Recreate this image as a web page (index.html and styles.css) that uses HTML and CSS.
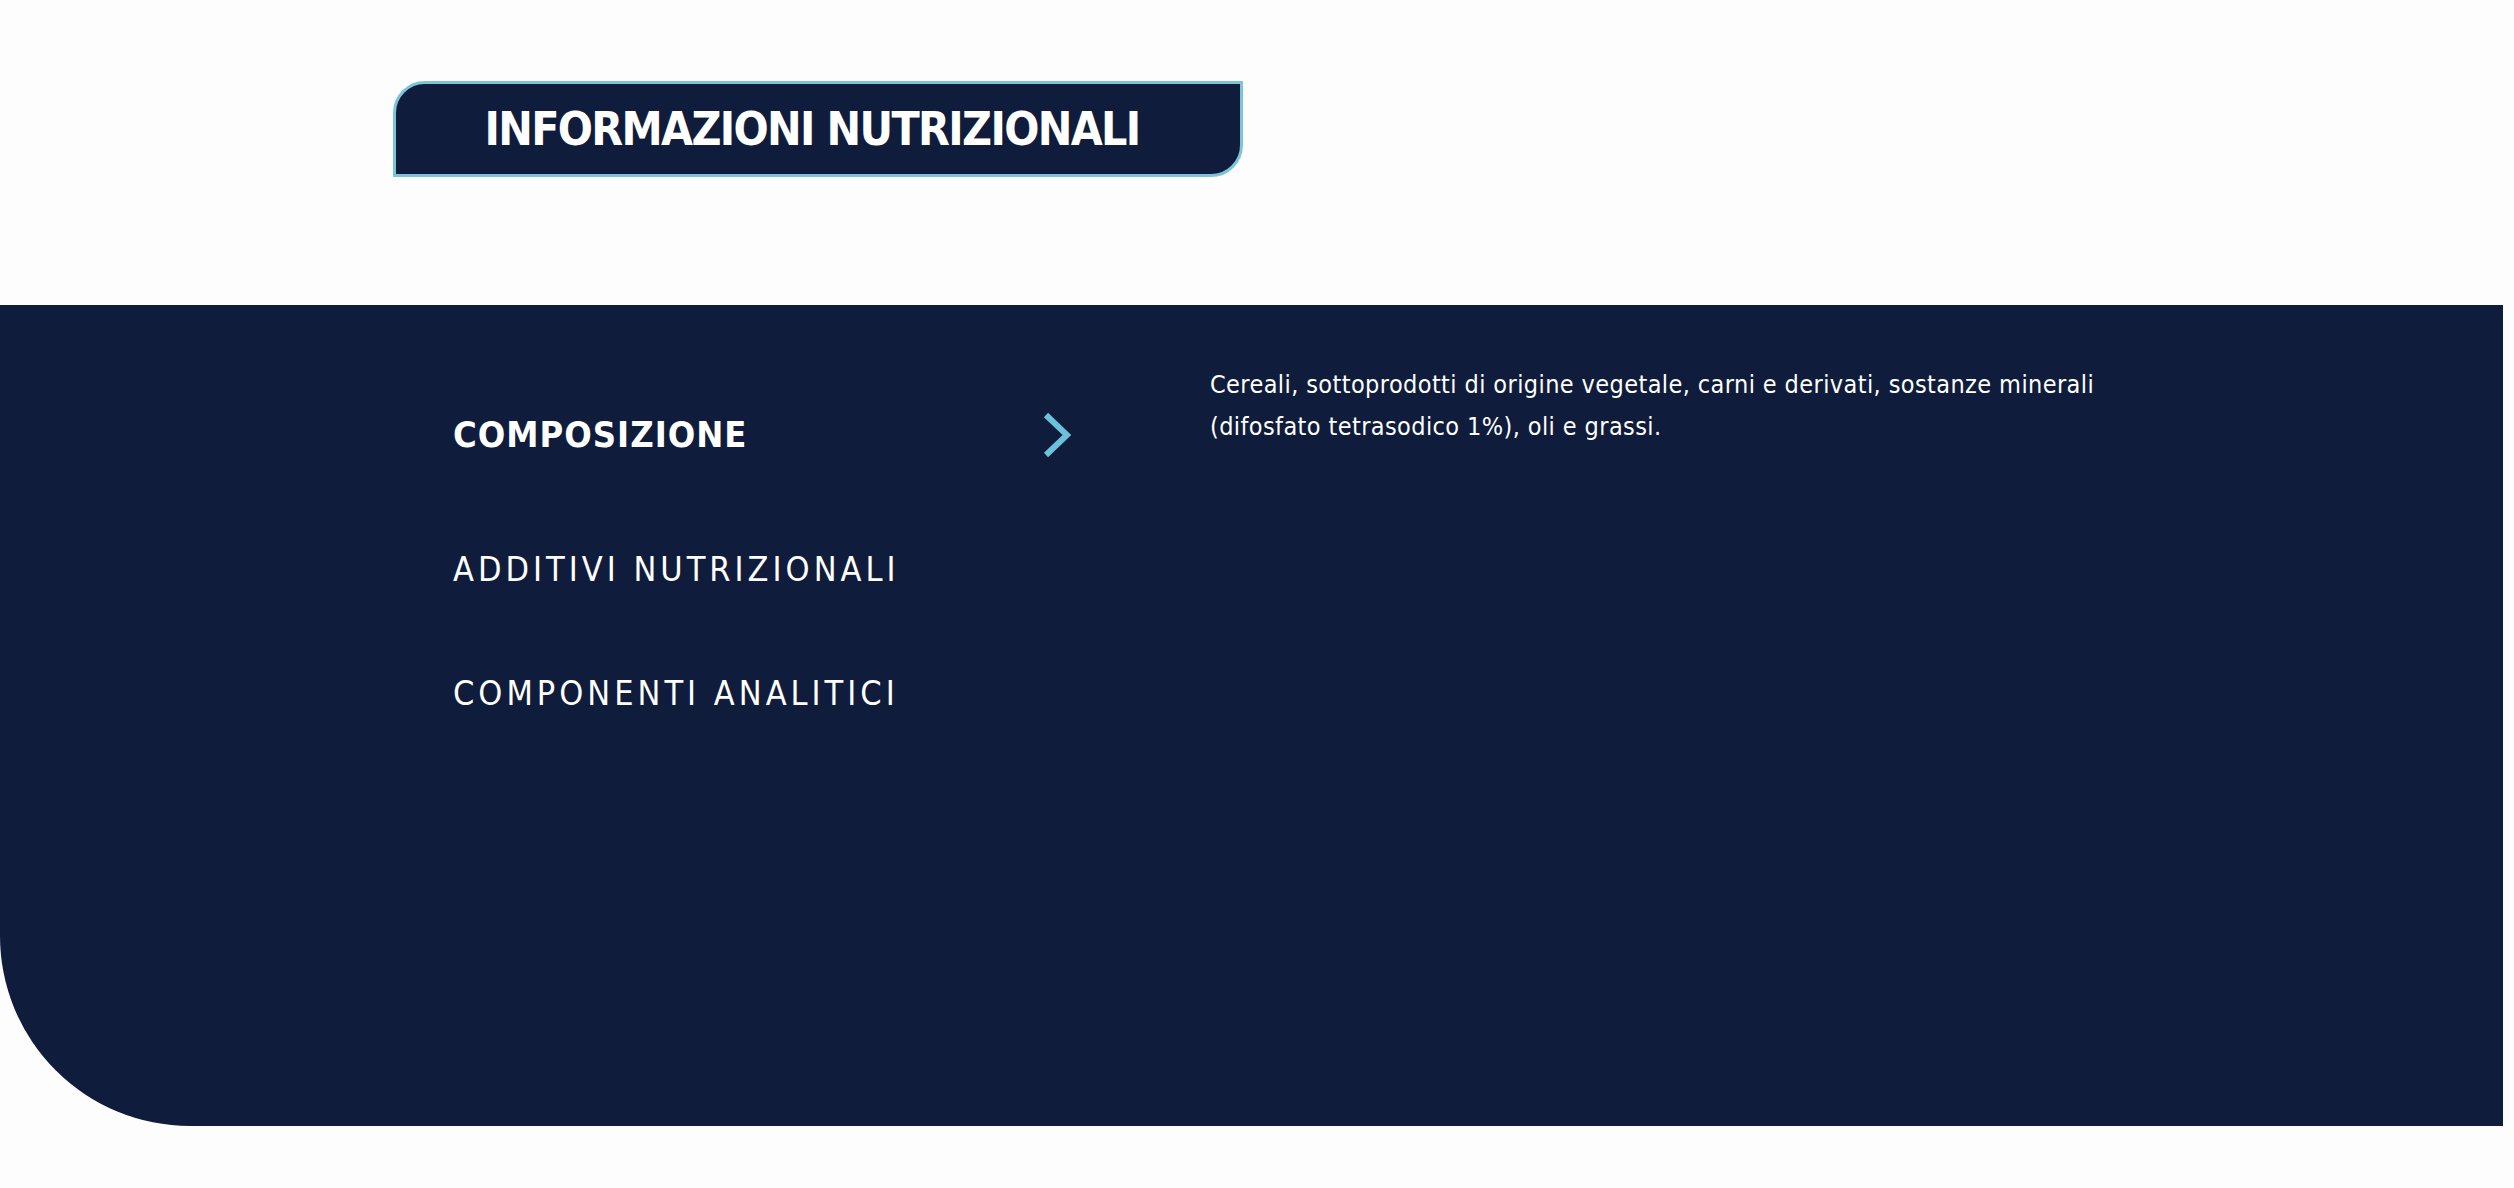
FILE: index.html
```html
<!doctype html>
<html lang="it">
  <head>
    <meta charset="UTF-8" />
    <meta name="viewport" content="width=device-width, initial-scale=1.0" />
    <title>Informazioni nutrizionali</title>
    <link rel="stylesheet" href="styles.css">
  </head>

  <body>
    <header class="intro">
      <h2 class="label">INFORMAZIONI NUTRIZIONALI</h2>
    </header>

    <section class="panel">
      <ul class="tabs">
        <li class="tab active">
          <span>COMPOSIZIONE</span>
          <svg class="chevron" width="28" height="46" viewBox="0 0 28 46">
            <polyline points="3,3 24,23 3,43" fill="none" stroke="#6cc2da" stroke-width="6" />
          </svg>
        </li>
        <li class="tab"><span>ADDITIVI NUTRIZIONALI</span></li>
        <li class="tab"><span>COMPONENTI ANALITICI</span></li>
      </ul>

      <div class="content">
        <p>
          Cereali, sottoprodotti di origine vegetale, carni e derivati, sostanze minerali
          (difosfato tetrasodico 1%), oli e grassi.
        </p>
      </div>
    </section>
  </body>
</html>
```

FILE: styles.css
```css
body {
  margin: 0;
  background: #fdfdfd;
  font-family: "DejaVu Sans Condensed", "DejaVu Sans", sans-serif;
  font-stretch: condensed;
  color: #fff;
}

.intro {
  height: 305px;
  padding: 81px 0 0 393px;
  box-sizing: border-box;
}

.label {
  display: flex;
  align-items: center;
  justify-content: center;
  box-sizing: border-box;
  width: 850px;
  height: 96px;
  margin: 0;
  padding-right: 12px;
  background: #101c3b;
  border: 3px solid #7cc4d7;
  border-radius: 32px 0 32px 0;
  font-size: 46px;
  font-weight: 700;
  letter-spacing: -1.65px;
}

.panel {
  display: flex;
  margin-right: 11px;
  height: 821px;
  box-sizing: border-box;
  padding: 59px 0 0 453px;
  background: #101c3b;
  border-bottom-left-radius: 190px;
}

.tabs {
  list-style: none;
  margin: 0;
  padding: 47px 0 0;
  width: 617px;
  display: flex;
  flex-direction: column;
  gap: 76px;
}

.tab {
  display: flex;
  align-items: center;
  justify-content: space-between;
  height: 48px;
  font-size: 34px;
  font-weight: 400;
  letter-spacing: 4px;
  line-height: 48px;

  & .chevron {
    margin-right: -1px;
  }
}

.tab.active {
  font-size: 36px;
  font-weight: 700;
  letter-spacing: 1px;
  margin-bottom: 10px;
}

.content {
  margin-left: 140px;
  width: 960px;

  & p {
    margin: 0;
    font-size: 25px;
    line-height: 42px;
    letter-spacing: 0.4px;
  }
}
```
